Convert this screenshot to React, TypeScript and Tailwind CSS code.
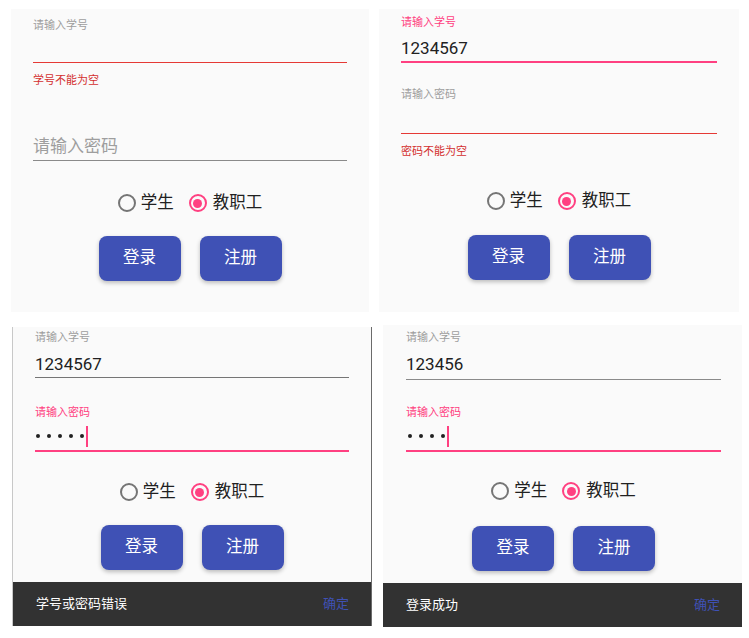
import type { ReactNode } from "react";

const font = "font-['Roboto','Noto_Sans_CJK_SC',sans-serif]";

const Panel = ({ className, children }: { className: string; children: ReactNode }) => (
  <div className={`flex flex-col bg-[#fafafa] ${className}`}>{children}</div>
);

const SmallLabel = ({ text, color = "text-[#9e9e9e]", className = "" }: { text: string; color?: string; className?: string }) => (
  <p className={`text-[11px] leading-[14px] ${color} ${className}`}>{text}</p>
);

const Radio = ({ checked }: { checked: boolean }) => (
  <span
    className={`flex h-[18px] w-[18px] items-center justify-center rounded-full border-2 ${
      checked ? "border-[#ff4081]" : "border-[#757575]"
    }`}
  >
    {checked && <span className="h-[9px] w-[9px] rounded-full bg-[#ff4081]" />}
  </span>
);

const RoleRow = ({ className }: { className: string }) => (
  <div className={`flex h-[24px] items-center justify-center text-[16.5px] text-[#212121] ${className}`}>
    <Radio checked={false} />
    <span className="ml-[5px] leading-[24px]">学生</span>
    <span className="ml-[15px]" />
    <Radio checked />
    <span className="ml-[6px] leading-[24px]">教职工</span>
  </div>
);

const Buttons = ({ className }: { className: string }) => (
  <div className={`flex justify-center gap-[19px] ${className}`}>
    {["登录", "注册"].map((label) => (
      <button
        key={label}
        type="button"
        className="h-[45px] w-[82px] rounded-[8px] bg-[#3f51b5] text-[16.5px] text-white shadow-[0_2px_4px_rgba(0,0,0,0.25)]"
      >
        {label}
      </button>
    ))}
  </div>
);

const Dots = ({ count }: { count: number }) => (
  <div className="flex h-[24px] items-center">
    <div className="flex gap-[7px]">
      {Array.from({ length: count }).map((_, i) => (
        <span key={i} className="h-[4px] w-[4px] rounded-full bg-[#212121]" />
      ))}
    </div>
    <span className="ml-[2px] h-[21px] w-[2px] bg-[#ff4081]" />
  </div>
);

const Snackbar = ({ text, className }: { text: string; className: string }) => (
  <div className={`flex h-[44px] items-center justify-between bg-[#323232] pl-[23px] pr-[22px] text-[13px] ${className}`}>
    <span className="text-white">{text}</span>
    <span className="text-[#3f51b5]">确定</span>
  </div>
);

export default function App() {
  return (
    <div className={`flex h-[638px] w-[749px] flex-col bg-white ${font}`}>
      <div className="flex gap-[10px] pl-[11px] pt-[9px]">
        {/* empty id error */}
        <Panel className="h-[303px] w-[358px] px-[22px] pt-[10px]">
          <SmallLabel text="请输入学号" />
          <div className="h-[30px] border-b border-[#e53935]" />
          <SmallLabel text="学号不能为空" color="text-[#d32f2f]" className="mt-[11px]" />
          <div className="mt-[46px] h-[27px] border-b border-[#8a8a8a] text-[17px] leading-[24px] text-[#9e9e9e]">请输入密码</div>
          <RoleRow className="mt-[30px]" />
          <Buttons className="mt-[21px]" />
        </Panel>

        {/* empty password error */}
        <Panel className="h-[303px] w-[360px] px-[22px] pt-[7px]">
          <SmallLabel text="请输入学号" color="text-[#ff4081]" />
          <div className="h-[33px] border-b-2 border-[#ff4081] pt-[6px] text-[17px] leading-[24px] text-[#212121]">1234567</div>
          <SmallLabel text="请输入密码" className="mt-[25px]" />
          <div className="h-[32px] border-b border-[#e53935]" />
          <SmallLabel text="密码不能为空" color="text-[#d32f2f]" className="mt-[11px]" />
          <RoleRow className="mt-[30px]" />
          <Buttons className="mt-[22px]" />
        </Panel>
      </div>

      <div className="flex items-start gap-[11px] pl-[12px]">
        {/* wrong credentials */}
        <Panel className="mt-[15px] h-[299px] w-[360px] border-x border-l-[#c8c8c8] border-r-[#6b6b6b]">
          <div className="px-[22px] pt-[4px]">
            <SmallLabel text="请输入学号" />
            <div className="h-[33px] border-b border-[#757575] pt-[7px] text-[17px] leading-[24px] text-[#212121]">1234567</div>
            <SmallLabel text="请输入密码" color="text-[#ff4081]" className="mt-[28px]" />
            <div className="h-[32px] border-b-2 border-[#ff4081] pl-[1px] pt-[4px]">
              <Dots count={5} />
            </div>
            <RoleRow className="mt-[28px]" />
            <Buttons className="mt-[21px]" />
          </div>
          <Snackbar text="学号或密码错误" className="mt-[12px]" />
        </Panel>

        {/* login ok */}
        <Panel className="mt-[13px] h-[302px] w-[359px]">
          <div className="pl-[23px] pr-[21px] pt-[6px]">
            <SmallLabel text="请输入学号" />
            <div className="h-[35px] border-b border-[#8a8a8a] pt-[7px] text-[17px] leading-[24px] text-[#212121]">123456</div>
            <SmallLabel text="请输入密码" color="text-[#ff4081]" className="mt-[26px]" />
            <div className="h-[32px] border-b-2 border-[#ff4081] pl-[2px] pt-[4px]">
              <Dots count={4} />
            </div>
            <RoleRow className="mt-[27px]" />
            <Buttons className="mt-[23px]" />
          </div>
          <Snackbar text="登录成功" className="mt-[12px]" />
        </Panel>
      </div>
    </div>
  );
}
